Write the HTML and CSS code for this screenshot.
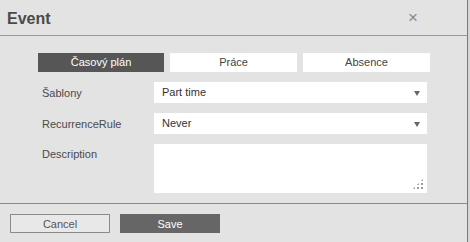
FILE: index.html
```html
<!DOCTYPE html>
<html>
    <head>
        <meta charset="utf-8">
        <title>Event</title>
        <link rel="stylesheet" href="styles.css">
    </head>
    <body>
    <div class="dialog">
        <div class="dialog-header">
            <span class="dialog-title">Event</span>
            <span class="dialog-close">&times;</span>
        </div>
        <div class="dialog-body">
            <div class="tabs">
                <div class="tab active">Časový plán</div>
                <div class="tab">Práce</div>
                <div class="tab">Absence</div>
            </div>
            <div class="row">
                <label class="row-label">Šablony</label>
                <div class="select">Part time<span class="caret"></span></div>
            </div>
            <div class="row">
                <label class="row-label">RecurrenceRule</label>
                <div class="select">Never<span class="caret"></span></div>
            </div>
            <div class="row row-top">
                <label class="row-label">Description</label>
                <div class="textarea"><span class="grip"></span></div>
            </div>
        </div>
        <div class="dialog-footer">
            <button class="btn btn-cancel">Cancel</button>
            <button class="btn btn-save">Save</button>
        </div>
    </div>
    </body>
</html>
```

FILE: styles.css
```css
body, html {
    height: 100%;
    margin: 0;
    padding: 0;
    font-family: "Liberation Sans", Arial, sans-serif;
}
body {
    background: #d6d6d6;
}
.dialog {
    width: 467px;
    height: 100%;
    background: #e3e3e3;
    border-right: 1px solid #7a7a7a;
    display: flex;
    flex-direction: column;
    color: #444;
}
.dialog-header {
    height: 35px;
    border-bottom: 1px solid #9a9a9a;
    display: flex;
    align-items: center;
    justify-content: space-between;
    padding: 0 49px 0 7px;
}
.dialog-title {
    font-size: 16px;
    font-weight: bold;
    color: #4a4a4a;
    margin-top: 2px;
}
.dialog-close {
    font-size: 17px;
    color: #8a8a8a;
    margin-top: 1px;
}
.dialog-body {
    padding: 17px 0 0 38px;
    height: 150px;
    border-bottom: 1px solid #8a8a8a;
}
.tabs {
    display: flex;
    gap: 6px;
    margin-bottom: 10px;
}
.tab {
    width: 127px;
    height: 19px;
    line-height: 19px;
    background: #fff;
    text-align: center;
    font-size: 11px;
    color: #444;
}
.tab.active {
    width: 126px;
    background: #565656;
    color: #fff;
}
.row {
    display: flex;
    align-items: center;
    margin-bottom: 10px;
}
.row-top {
    align-items: flex-start;
}
.row-label {
    width: 112px;
    padding-left: 4px;
    font-size: 11px;
    color: #4a4a4a;
}
.row-top .row-label {
    padding-top: 4px;
}
.select {
    width: 265px;
    height: 21px;
    line-height: 21px;
    padding-left: 8px;
    background: #fff;
    font-size: 11px;
    color: #333;
    position: relative;
}
.caret {
    position: absolute;
    right: 7px;
    top: 9px;
    border-left: 3.5px solid transparent;
    border-right: 3.5px solid transparent;
    border-top: 5px solid #666;
}
.textarea {
    width: 273px;
    height: 49px;
    background: #fff;
    position: relative;
}
.grip {
    position: absolute;
    right: 3px;
    bottom: 3px;
    width: 12px;
    height: 12px;
    background-image: radial-gradient(circle, #999 1px, transparent 1.2px);
    background-size: 4px 4px;
    clip-path: polygon(100% 0, 100% 100%, 0 100%);
}
.dialog-footer {
    display: flex;
    gap: 10px;
    padding: 10px 0 0 10px;
}
.btn {
    width: 100px;
    height: 19px;
    font-family: "Liberation Sans", Arial, sans-serif;
    font-size: 11px;
    padding: 0;
    cursor: pointer;
}
.btn-cancel {
    background: #e8e8e8;
    border: 1px solid #8a8a8a;
    color: #555;
}
.btn-save {
    background: #666;
    border: 1px solid #666;
    color: #fff;
}
```
